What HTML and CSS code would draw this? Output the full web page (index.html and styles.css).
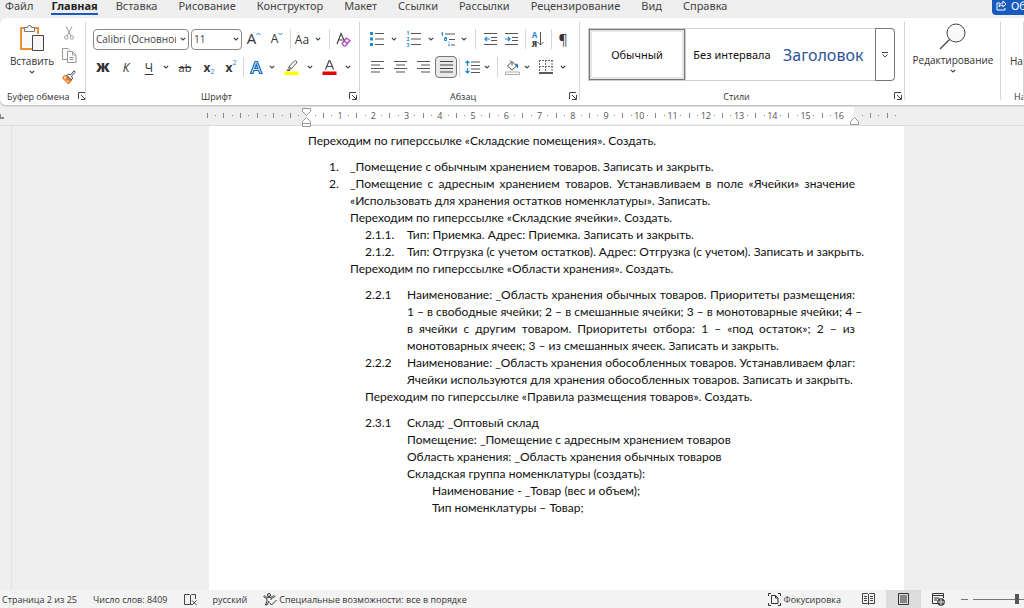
FILE: index.html
```html
<!DOCTYPE html>
<html lang="ru">
<head>
    <meta charset="UTF-8">
    <meta name="viewport" content="width=device-width, initial-scale=1">
    <title>Документ</title>
    <link rel="stylesheet" href="styles.css">
</head>
<body>
    <svg class="defs" aria-hidden="true">
        <symbol id="chev" viewBox="0 0 6 4"><path d="M.8.8 3 3 5.2.8" fill="none" stroke="#444" stroke-width="1.2"/></symbol>
        <symbol id="launch" viewBox="0 0 8 8"><path d="M.5 7V.5H7M3 3l4 4M7.5 3v4.500H3" fill="none" stroke="#444"/></symbol>
    </svg>

    <nav class="tabs">
        <a href="#">Файл</a>
        <a href="#" class="active">Главная</a>
        <a href="#">Вставка</a>
        <a href="#">Рисование</a>
        <a href="#">Конструктор</a>
        <a href="#">Макет</a>
        <a href="#">Ссылки</a>
        <a href="#">Рассылки</a>
        <a href="#">Рецензирование</a>
        <a href="#">Вид</a>
        <a href="#">Справка</a>
        <button class="share">
            <svg width="11" height="11" viewBox="0 0 11 11" fill="none" stroke="#fff"><path d="M4 3H1v7h8V8M3 7c0-3 2-4 4-4V1l3 3-3 3V5C5 5 4 6 3 7z"/></svg>
            <span>Общий доступ</span>
        </button>
    </nav>

    <header class="ribbon">
        <section class="group clipboard">
            <div class="group-body">
                <button class="big paste">
                    <svg width="26" height="28" viewBox="0 0 26 28" fill="none">
                        <path d="M6 4H2v21h11M15 4h4v6" stroke="#e8912d" stroke-width="2"/>
                        <path d="M4 6h13v17H4z" fill="#fafafa"/>
                        <path d="M5.500 3.500h3a2 2 0 0 1 4 0h3v4h-10z" fill="#fff" stroke="#777"/>
                        <path d="M13.500 11.500h11v15h-11z" fill="#f7f7f7" stroke="#444"/>
                    </svg>
                    <span>Вставить</span>
                    <svg width="6" height="4"><use href="#chev"/></svg>
                </button>
                <div class="clip-tools">
                    <button aria-label="Вырезать"><svg width="10" height="14" viewBox="0 0 10 14" fill="none" stroke="#999"><path d="M2 .5 7 10M8 .5 3 10"/><circle cx="2.200" cy="11.500" r="1.700"/><circle cx="7.800" cy="11.500" r="1.700"/></svg></button>
                    <button aria-label="Копировать"><svg width="15" height="15" viewBox="0 0 15 15" fill="#fafafa" stroke="#999"><path d="M5 11.500H.5V.5H6l2 2"/><path d="M5.500 3.500h5l3.500 3.500v7.500H5.500zM10.500 3.500V7H14M7.500 9.500h4M7.500 11.500h4"/></svg></button>
                    <button aria-label="Формат по образцу"><svg width="14" height="14" viewBox="0 0 14 14"><path d="M2 6 1 8l5.500 5.500L9.500 10 5 5.500z" fill="#fff" stroke="#e8791d" stroke-width="1.300"/><path d="M3 9l5 3 1.500-2L5 6z" fill="#e8791d"/><path d="M5 5.500 6.500 4l2 1 3.500-4.200 1.400 1.400L9.500 6l1 2.200L9.400 10z" fill="#fff" stroke="#444"/></svg></button>
                </div>
            </div>
            <footer><span>Буфер обмена</span><button aria-label="Параметры буфера обмена"><svg width="8" height="8"><use href="#launch"/></svg></button></footer>
        </section>

        <section class="group font">
            <div class="group-body">
                <div class="row font-top">
                    <div class="combo">
                        <select aria-label="Шрифт"><option>Calibri (Основной текст)</option></select>
                        <svg width="6" height="4"><use href="#chev"/></svg>
                    </div>
                    <div class="combo">
                        <select aria-label="Размер шрифта"><option>11</option></select>
                        <svg width="6" height="4"><use href="#chev"/></svg>
                    </div>
                    <button class="grow" aria-label="Увеличить размер шрифта">A<svg width="5" height="4" viewBox="0 0 5 4"><path d="M.5 3 2.500 1l2 2" fill="none" stroke="#1e88cf"/></svg></button>
                    <button class="shrink" aria-label="Уменьшить размер шрифта">A<svg width="5" height="4" viewBox="0 0 5 4"><path d="M.5 1l2 2 2-2" fill="none" stroke="#1e88cf"/></svg></button>
                    <i class="sep"></i>
                    <button class="case">Aa</button>
                    <button aria-label="Варианты регистра"><svg width="6" height="4"><use href="#chev"/></svg></button>
                    <i class="sep"></i>
                    <button aria-label="Очистить форматирование"><svg width="15" height="15" viewBox="0 0 15 15" fill="none"><path d="M1 12 5 1.500 8.500 9M2.500 8h4.500" stroke="#444" stroke-width="1.200"/><path d="M6 11.500 10.500 6l3.500 2.500-4.500 5.500H8zM8 9l3.500 2.500" fill="#f6e6f8" stroke="#a63fb5" stroke-width="1.200"/></svg></button>
                </div>
                <div class="row font-bottom">
                    <button class="bold">Ж</button>
                    <button class="italic">К</button>
                    <button class="underline">Ч</button>
                    <button aria-label="Вид подчёркивания"><svg width="6" height="4"><use href="#chev"/></svg></button>
                    <button class="strike">ab</button>
                    <button class="script"><b>x</b><sub>2</sub></button>
                    <button class="script"><b>x</b><sup>2</sup></button>
                    <i class="sep"></i>
                    <button aria-label="Текстовые эффекты"><svg width="15" height="15" viewBox="0 0 15 15"><path d="M1.500 13.500 6 1.500h2.500L13 13.500h-2.500L9.500 10.500H5l-1 3zM5.800 8.500h3L7.300 4.200z" fill="#bfe0f7" stroke="#1b6fb8" stroke-width="1.200"/></svg></button>
                    <button aria-label="Список эффектов"><svg width="6" height="4"><use href="#chev"/></svg></button>
                    <button aria-label="Цвет выделения"><svg width="15" height="15" viewBox="0 0 15 15"><path d="M.5 11.500h14V15H.5z" fill="#ff0"/><path d="M5 6.500 10.500 1c1-1 3 .5 2 2L7.500 8.500 5 9.500zM5 6.500l2.500 2M4.500 9 3 10.500h3" fill="#fff" stroke="#555"/></svg></button>
                    <button aria-label="Список цветов выделения"><svg width="6" height="4"><use href="#chev"/></svg></button>
                    <button aria-label="Цвет текста"><svg width="15" height="15" viewBox="0 0 15 15"><path d="M.5 11.500h14V15H.5z" fill="#e60000"/><path d="M3.500 9.500 7 .8h1L11.500 9.500M4.800 6.500h5.400" fill="none" stroke="#444" stroke-width="1.200"/></svg></button>
                    <button aria-label="Список цветов текста"><svg width="6" height="4"><use href="#chev"/></svg></button>
                </div>
            </div>
            <footer><span>Шрифт</span><button aria-label="Параметры шрифта"><svg width="8" height="8"><use href="#launch"/></svg></button></footer>
        </section>

        <section class="group paragraph">
            <div class="group-body">
                <div class="row para-top">
                    <button aria-label="Маркеры"><svg width="15" height="14" viewBox="0 0 15 14"><path d="M0 0h3v3H0zM0 5.500h3v3H0zM0 11h3v3H0z" fill="#1e88cf"/><path d="M5 1.500h9M5 7h9M5 12.500h9" stroke="#555"/></svg></button>
                    <button aria-label="Список маркеров"><svg width="6" height="4"><use href="#chev"/></svg></button>
                    <button class="numbered" aria-label="Нумерация"><span>1<br>2<br>3</span><svg width="10" height="14" viewBox="0 0 10 14"><path d="M0 1.500h10M0 7h10M0 12.500h10" stroke="#555"/></svg></button>
                    <button aria-label="Список нумерации"><svg width="6" height="4"><use href="#chev"/></svg></button>
                    <button aria-label="Многоуровневый список"><svg width="15" height="15" viewBox="0 0 15 15" fill="none"><path d="M0 1.500 1.500.5V4M3.500 5.500h2v3h-2v-2h2M8 9.500v1M8 11.500V14.500" stroke="#1e88cf"/><path d="M4 2h10M8 7.500h6M10 13h4" stroke="#555"/></svg></button>
                    <button aria-label="Список уровней"><svg width="6" height="4"><use href="#chev"/></svg></button>
                    <i class="sep"></i>
                    <button aria-label="Уменьшить отступ"><svg width="13" height="12" viewBox="0 0 13 12" fill="none"><path d="M0 .5h13M7 4.500h6M7 7.500h6M0 11.500h13" stroke="#555"/><path d="M6 6H1M3 4 1 6l2 2" stroke="#1e88cf" stroke-width="1.200"/></svg></button>
                    <button aria-label="Увеличить отступ"><svg width="13" height="12" viewBox="0 0 13 12" fill="none"><path d="M0 .5h13M7 4.500h6M7 7.500h6M0 11.500h13" stroke="#555"/><path d="M0 6h5M3 4l2 2-2 2" stroke="#1e88cf" stroke-width="1.200"/></svg></button>
                    <i class="sep"></i>
                    <button class="sort" aria-label="Сортировка"><span>А<br><b>Я</b></span><svg width="7" height="14" viewBox="0 0 7 14"><path d="M3.500 0v13M.5 10l3 3 3-3" fill="none" stroke="#555"/></svg></button>
                    <i class="sep"></i>
                    <button class="pilcrow" aria-label="Отобразить все знаки">¶</button>
                </div>
                <div class="row para-bottom">
                    <button aria-label="По левому краю"><svg width="13" height="12" viewBox="0 0 13 12"><path d="M0 .5h13M0 4h9M0 7.500h13M0 11h9" stroke="#555"/></svg></button>
                    <button aria-label="По центру"><svg width="13" height="12" viewBox="0 0 13 12"><path d="M0 .5h13M2 4h9M0 7.500h13M2 11h9" stroke="#555"/></svg></button>
                    <button aria-label="По правому краю"><svg width="13" height="12" viewBox="0 0 13 12"><path d="M0 .5h13M4 4h9M0 7.500h13M4 11h9" stroke="#555"/></svg></button>
                    <button class="pressed" aria-label="По ширине" aria-pressed="true"><svg width="13" height="12" viewBox="0 0 13 12"><path d="M0 .5h13M0 4h13M0 7.500h13M0 11h13" stroke="#444"/></svg></button>
                    <i class="sep"></i>
                    <button aria-label="Интервал"><svg width="15" height="14" viewBox="0 0 15 14" fill="none"><path d="M6 2h9M6 5.500h9M6 9h9M6 12.500h9" stroke="#555"/><path d="M2.500 1v5M.5 3l2-2 2 2M2.500 8v5M.5 11l2 2 2-2" stroke="#1e88cf" stroke-width="1.200"/></svg></button>
                    <button aria-label="Список интервалов"><svg width="6" height="4"><use href="#chev"/></svg></button>
                    <i class="sep"></i>
                    <button aria-label="Заливка"><svg width="15" height="15" viewBox="0 0 15 15"><path d="M.5 12h14v2.500H.5z" fill="#fff" stroke="#aaa"/><path d="M2.500 6 7 1.500l4.500 4.500L7 10zM5 .5l2 2v3" fill="#fff" stroke="#555"/><path d="M11 3.500c2 0 2.500 2 2 5.500-.8-2-1.300-3-2.500-3z" fill="#1e6fb8"/></svg></button>
                    <button aria-label="Список заливок"><svg width="6" height="4"><use href="#chev"/></svg></button>
                    <button aria-label="Границы"><svg width="14" height="14" viewBox="0 0 14 14"><path d="M.5 0v12M6.500 0v12M13 0v12M0 .5h14M0 6.500h14" fill="none" stroke="#666" stroke-dasharray="2 1"/><path d="M0 13h14" stroke="#222" stroke-width="1.500"/></svg></button>
                    <button aria-label="Список границ"><svg width="6" height="4"><use href="#chev"/></svg></button>
                </div>
            </div>
            <footer><span>Абзац</span><button aria-label="Параметры абзаца"><svg width="8" height="8"><use href="#launch"/></svg></button></footer>
        </section>

        <section class="group styles">
            <div class="group-body">
                <div class="gallery">
                    <button class="style selected">Обычный</button>
                    <button class="style">Без интервала</button>
                    <button class="style heading">Заголовок 1</button>
                    <button class="more" aria-label="Все стили"><svg width="8" height="6" viewBox="0 0 8 6"><path d="M1 .5h6M1.500 2.500 4 5l2.500-2.500" fill="none" stroke="#444"/></svg></button>
                </div>
            </div>
            <footer><span>Стили</span><button aria-label="Параметры стилей"><svg width="8" height="8"><use href="#launch"/></svg></button></footer>
        </section>

        <section class="group editing">
            <button class="big">
                <svg width="28" height="28" viewBox="0 0 28 28"><circle cx="17" cy="10" r="9" fill="#f8f8f8" stroke="#444"/><path d="M10.500 16.500 1 26" stroke="#444" stroke-width="1.200"/></svg>
                <span>Редактирование</span>
                <svg width="6" height="4"><use href="#chev"/></svg>
            </button>
        </section>

        <section class="group addins">
            <div class="group-body"><button>Надстройки</button></div>
            <footer><span>Надстройки</span></footer>
        </section>
    </header>

    <div class="ruler">
        <span class="tab-stop"></span>
        <div class="scale">
            <div class="off before"><i></i><i></i><i></i><i></i><i></i><i></i><i></i><i></i><i></i><i></i><i></i><i></i></div>
            <div class="on">
                <span class="cm"><i></i><i></i><i></i><b>1</b></span><span class="cm"><i></i><i></i><i></i><b>2</b></span><span class="cm"><i></i><i></i><i></i><b>3</b></span><span class="cm"><i></i><i></i><i></i><b>4</b></span>
                <span class="cm"><i></i><i></i><i></i><b>5</b></span><span class="cm"><i></i><i></i><i></i><b>6</b></span><span class="cm"><i></i><i></i><i></i><b>7</b></span><span class="cm"><i></i><i></i><i></i><b>8</b></span>
                <span class="cm"><i></i><i></i><i></i><b>9</b></span><span class="cm"><i></i><i></i><i></i><b>10</b></span><span class="cm"><i></i><i></i><i></i><b>11</b></span><span class="cm"><i></i><i></i><i></i><b>12</b></span>
                <span class="cm"><i></i><i></i><i></i><b>13</b></span><span class="cm"><i></i><i></i><i></i><b>14</b></span><span class="cm"><i></i><i></i><i></i><b>15</b></span><span class="cm"><i></i><i></i><i></i><b>16</b></span>
                <svg class="indent left" width="9" height="20" viewBox="0 0 9 20"><path d="M.5 1.500h8v3l-4 4-4-4zM.5 19.500v-5l4-4 4 4v5zM.5 16.500h8" fill="#fff" stroke="#999"/></svg>
                <svg class="indent right" width="9" height="20" viewBox="0 0 9 20"><path d="M.5 17.500v-3l4-4 4 4v3z" fill="#fff" stroke="#999"/></svg>
            </div>
            <div class="off after"><i></i><i></i><i></i><i></i><i></i></div>
        </div>
    </div>

    <main class="workspace">
        <div class="side-ruler"></div>
        <article class="page">
            <p>Переходим по гиперссылке «Складские помещения». Создать.</p>
            <ol class="level1 spaced">
                <li><span>1.</span><p>_Помещение с обычным хранением товаров. Записать и закрыть.</p></li>
                <li><span>2.</span><p class="justified">
                    <span>_Помещение с адресным хранением товаров. Устанавливаем в поле «Ячейки» значение </span>
                    <span>«Использовать для хранения остатков номенклатуры». Записать.</span>
                </p></li>
            </ol>
            <p class="in1">Переходим по гиперссылке «Складские ячейки». Создать.</p>
            <ol class="level2">
                <li><span>2.1.1.</span><p>Тип: Приемка. Адрес: Приемка. Записать и закрыть.</p></li>
                <li><span>2.1.2.</span><p>Тип: Отгрузка (с учетом остатков). Адрес: Отгрузка (с учетом). Записать и закрыть.</p></li>
            </ol>
            <p class="in1">Переходим по гиперссылке «Области хранения». Создать.</p>
            <ol class="level2 spaced">
                <li><span>2.2.1</span><p class="justified">
                    <span>Наименование: _Область хранения обычных товаров. Приоритеты размещения: </span>
                    <span>1 – в свободные ячейки; 2 – в смешанные ячейки; 3 – в монотоварные ячейки; 4 – </span>
                    <span>в ячейки с другим товаром. Приоритеты отбора: 1 – «под остаток»; 2 – из </span>
                    <span>монотоварных ячеек; 3 – из смешанных ячеек. Записать и закрыть.</span>
                </p></li>
                <li><span>2.2.2</span><p class="justified">
                    <span>Наименование: _Область хранения обособленных товаров. Устанавливаем флаг: </span>
                    <span>Ячейки используются для хранения обособленных товаров. Записать и закрыть.</span>
                </p></li>
            </ol>
            <p class="in2">Переходим по гиперссылке «Правила размещения товаров». Создать.</p>
            <ol class="level2 spaced">
                <li><span>2.3.1</span><div>
                    <p>Склад: _Оптовый склад</p>
                    <p>Помещение: _Помещение с адресным хранением товаров</p>
                    <p>Область хранения: _Область хранения обычных товаров</p>
                    <p>Складская группа номенклатуры (создать):</p>
                    <p class="sub">Наименование - _Товар (вес и объем);</p>
                    <p class="sub">Тип номенклатуры – Товар;</p>
                </div></li>
            </ol>
        </article>
    </main>

    <footer class="status">
        <span>Страница 2 из 25</span>
        <span>Число слов: 8409</span>
        <button aria-label="Правописание"><svg width="13" height="13" viewBox="0 0 13 13" fill="none" stroke="#444"><path d="M6.500 2v9.500H.5V1.500h5l1 1 1-1h4V6M6.500 11.500H8M8 7.500l4.500 4.500M12.500 7.500 8 12"/></svg></button>
        <span>русский</span>
        <button class="access"><svg width="14" height="13" viewBox="0 0 14 13" fill="none" stroke="#333"><circle cx="6" cy="2" r="1.500"/><path d="M1 3c1-1 1.500 1.500 5 1.500S10 2 11.500 3 9 5 8 5.500V7M1 3c-1 1 1.500 2 3 2.500V8l-1.500 4H4l2-4M6.500 9.500l2 2.500 5-5"/></svg>Специальные возможности: все в порядке</button>
        <div class="views">
            <button class="focus"><svg width="13" height="13" viewBox="0 0 13 13" fill="none" stroke="#333"><path d="M3 .5H.5V3M10 .5h2.500V3M.5 10v2.500H3M12.500 10v2.500H10M3.500 2.500h4l2.500 2.500v5.500H3.500zM7.500 2.500V5H10"/></svg>Фокусировка</button>
            <button class="view" aria-label="Режим чтения"><svg width="13" height="12" viewBox="0 0 13 12" fill="none" stroke="#444"><path d="M6.500 1.500v10M6.500 1.500 5.500.5h-5v10h5l1 1 1-1h5V.5h-5zM2 3.500h3M2 5.500h3M2 7.500h3M8 3.500h3M8 5.500h3M8 7.500h3"/></svg></button>
            <button class="view current" aria-label="Разметка страницы"><svg width="11" height="12" viewBox="0 0 11 12" fill="none" stroke="#333"><path d="M.5.5h10v11H.5zM2 3h7M2 5h7M2 7h7M2 9h7"/></svg></button>
            <button class="view" aria-label="Веб-документ"><svg width="13" height="13" viewBox="0 0 13 13" fill="none" stroke="#333"><path d="M6 10.500H.5V.5h11V5M.5 2.500h11M2 5h5M2 7h3"/><circle cx="9" cy="9" r="3.500" fill="#555"/><path d="M5.500 9h7M9 5.500v7" stroke="#ddd"/></svg></button>
            <button class="minus" aria-label="Уменьшить"></button>
            <input class="zoom" type="range" min="0" max="100" value="90" aria-label="Масштаб">
        </div>
    </footer>
</body>
</html>
```
FILE: styles.css
```css
* {
    box-sizing: border-box;
}
body {
    margin: 0;
    min-height: 100vh;
    display: flex;
    flex-direction: column;
    overflow: hidden;
    background-color: #efefef;
    color: #333;
    font-family: "Open Sans", "Noto Sans", sans-serif;
    font-size: 10px;
}
button {
    display: flex;
    align-items: center;
    justify-content: center;
    padding: 0;
    border: none;
    background: none;
    color: inherit;
    font: inherit;
    white-space: nowrap;
}
svg {
    flex: none;
    display: block;
}
p, ol {
    margin: 0;
    padding: 0;
}
.defs {
    width: 0;
    height: 0;
    position: absolute;
}

/* tabs */
.tabs {
    display: flex;
    gap: 21px;
    height: 18px;
    padding-left: 5px;
    font-family: "Noto Sans", sans-serif;
    font-size: 11px;
}
.tabs a {
    height: 15px;
    line-height: 11px;
    color: #444;
    text-decoration: none;
}
.tabs .active {
    margin: 0 -3px;
    color: #222;
    font-weight: bold;
    border-bottom: 2px solid #185abd;
}
.share {
    width: 32px;
    height: 15px;
    margin-left: auto;
    padding: 0 0 4px 4px;
    gap: 4px;
    justify-content: flex-start;
    overflow: hidden;
    border-radius: 0 0 0 4px;
    background-color: #185abd;
    color: #fff;
}

/* ribbon */
.ribbon {
    display: flex;
    height: 87px;
    overflow: hidden;
    border-radius: 6px 0 0 6px;
    background-color: #fff;
    box-shadow: 0 1px 2px rgba(0,0,0,0.25);
    z-index: 1;
}
.group {
    display: flex;
    flex-direction: column;
    flex: none;
    position: relative;
    padding: 10px 0 0 7px;
}
.group::after {
    content: "";
    position: absolute;
    top: 4px;
    right: 0;
    bottom: 5px;
    width: 1px;
    background-color: #d6d6d6;
}
.group footer {
    display: flex;
    align-items: center;
    height: 14px;
    margin-top: auto;
    margin-bottom: 2px;
    padding-right: 3px;
    font-size: 9px;
}
.group footer span {
    flex: 1;
    padding-right: 9px;
    text-align: center;
    white-space: nowrap;
}
.clipboard {
    width: 86px;
}
.clipboard .group-body {
    display: flex;
    gap: 4px;
}
.big {
    flex-direction: column;
    gap: 3px;
    justify-content: flex-start;
}
.big span {
    line-height: 12px;
}
.paste {
    width: 50px;
    margin: -4px 0 0 0;
}
.clip-tools {
    display: flex;
    flex-direction: column;
    width: 16px;
    margin-top: -6px;
}
.clip-tools button {
    height: 22px;
}
.font {
    width: 274px;
}
.paragraph {
    width: 220px;
    padding-left: 6px;
}
.styles {
    flex: 1;
    min-width: 280px;
    padding-left: 8px;
}
.editing {
    width: 96px;
    padding: 5px 0 0 0;
}
.addins {
    width: 23px;
    padding-left: 9px;
}
.addins .group-body {
    padding-top: 26px;
}
.addins footer {
    padding-left: 4px;
}
.row {
    display: grid;
    height: 22px;
    margin-bottom: 6px;
    align-items: center;
    justify-items: center;
}
.row button {
    height: 22px;
}
.font-top {
    grid-template-columns: 98px 51px 24px 22px 4px 20px 12px 10px 18px;
}
.font-bottom {
    grid-template-columns: 20px 26px 20px 14px 24px 24px 20px 4px 22px 10px 28px 10px 28px 10px;
}
.para-top {
    grid-template-columns: 22px 12px 26px 10px 24px 8px 14px 16px 26px 2px 24px 2px 22px;
}
.para-bottom {
    grid-template-columns: 22px 24px 22px 24px 2px 24px 6px 14px 16px 14px 24px 10px;
}
.sep {
    width: 1px;
    height: 20px;
    background-color: #d6d6d6;
}
.combo {
    display: grid;
    align-items: center;
    justify-self: start;
    width: calc(100% - 2px);
}
.combo:nth-child(2) {
    width: 100%;
}
.combo select, .combo svg {
    grid-area: 1 / 1;
}
.combo svg {
    justify-self: end;
    margin-right: 3px;
}
.combo select {
    appearance: none;
    width: 100%;
    height: 21px;
    padding: 0 12px 0 2px;
    border: 1px solid #8a8a8a;
    border-radius: 4px;
    background-color: #fff;
    color: #444;
    font: inherit;
}
.grow, .shrink {
    align-items: flex-start;
    font-size: 15px;
    line-height: 20px;
}
.shrink {
    font-size: 12px;
    line-height: 22px;
}
.grow svg, .shrink svg {
    margin-top: 4px;
}
.case {
    font-size: 12px;
}
.bold {
    font-size: 13px;
    font-weight: 800;
}
.italic {
    font-size: 12px;
    font-style: italic;
}
.underline {
    font-size: 12px;
    text-decoration: underline;
    text-underline-offset: 2px;
}
.strike {
    font-size: 11px;
    text-decoration: line-through;
}
.script b {
    font-size: 12px;
}
.script sub, .script sup {
    color: #1e88cf;
    font-size: 7px;
    line-height: 7px;
}
.script sub {
    align-self: flex-end;
    padding-bottom: 3px;
}
.script sup {
    align-self: flex-start;
    padding-top: 3px;
}
.numbered span {
    width: 5px;
    color: #1e88cf;
    font-size: 5px;
    font-weight: bold;
    line-height: 6px;
}
.sort span {
    color: #1e88cf;
    font-size: 8px;
    font-weight: bold;
    line-height: 9px;
}
.sort b {
    color: #444;
}
.pilcrow {
    font-size: 14px;
}
.row .pressed {
    width: 22px;
    border: 1px solid #777;
    border-radius: 4px;
    background-color: #e8e8e8;
}

/* style gallery */
.gallery {
    display: grid;
    grid-template-columns: 96px 94px 1fr 20px;
    height: 53px;
    margin-right: 10px;
    border: 1px solid #d0d0d0;
    border-right: none;
    border-radius: 4px;
}
.style {
    overflow: hidden;
    color: #111;
    font-family: "Noto Sans", sans-serif;
    font-size: 11px;
}
.selected {
    border: 1px solid #777;
    outline: 1px solid #ccc;
    box-shadow: inset 0 0 0 2px #e6e6e6;
}
.heading {
    justify-content: flex-start;
    margin-right: 7px;
    padding-left: 4px;
    color: #2f5597;
    font-size: 16px;
}
.more {
    margin: -1px 0;
    border: 1px solid #777;
    border-radius: 0 4px 4px 0;
}

/* ruler */
.ruler, .workspace {
    display: grid;
    grid-template-columns: 12px minmax(0, 197fr) 695px minmax(0, 120fr);
}
.ruler {
    height: 21px;
    border-bottom: 1px solid #dcdcdc;
}
.tab-stop {
    width: 4px;
    height: 5px;
    margin-top: 9px;
    border-bottom: 2px solid #888;
    border-left: 1px solid #888;
}
.scale {
    grid-column: 3;
    display: grid;
    grid-template-columns: 98px 547px 50px;
    padding-top: 2px;
}
.scale > div {
    display: grid;
    align-items: center;
    height: 17px;
}
.scale .on {
    grid-template-columns: repeat(16, 1fr);
    position: relative;
    padding: 0 11px 0 4px;
    background-color: #fff;
}
.scale .before {
    grid-template-columns: repeat(12, 1fr);
    margin-left: -6px;
    padding-right: 4px;
}
.scale .after {
    grid-template-columns: repeat(5, 1fr);
    padding: 0 4px;
}
.cm {
    display: grid;
    grid-template-columns: repeat(4, minmax(0, 1fr));
    align-items: center;
}
.scale i, .scale b {
    display: flex;
    justify-content: center;
    color: #555;
    font-size: 9px;
    font-weight: normal;
}
.scale i::before {
    content: "";
    width: 1px;
    height: 1px;
    background-color: #888;
}
.cm i:nth-child(even)::before, .before i:nth-child(odd)::before, .after i:nth-child(even)::before {
    height: 5px;
}
.indent {
    position: absolute;
    top: 0;
}
.indent.left {
    left: -5px;
}
.indent.right {
    right: -5px;
}

/* document */
.workspace {
    flex: 1;
}
.side-ruler {
    border-right: 1px solid #e2e2e2;
}
.page {
    grid-column: 3;
    padding: 6px 49px 0 99px;
    background-color: #fff;
    color: #111;
    font-family: Lato, sans-serif;
    font-size: 12px;
    line-height: 17px;
    white-space: nowrap;
}
.page ol {
    list-style: none;
}
.page li {
    display: grid;
}
.page .spaced {
    padding-top: 9px;
}
.level1 li {
    grid-template-columns: 21px minmax(0, 1fr);
    padding-left: 21px;
}
.level2 li {
    grid-template-columns: 42px minmax(0, 1fr);
    padding-left: 57px;
}
.justified span {
    display: block;
    text-align: justify;
    text-align-last: justify;
}
.justified span:last-child {
    text-align-last: left;
}
.in1 {
    padding-left: 42px;
}
.in2 {
    padding-left: 57px;
}
.sub {
    padding-left: 25px;
}

/* status bar */
.status {
    display: flex;
    align-items: center;
    gap: 16px;
    height: 18px;
    padding-left: 2px;
    background-color: #f3f3f3;
    font-size: 9px;
}
.access {
    gap: 2px;
}
.views {
    display: flex;
    align-items: center;
    margin-left: auto;
}
.focus {
    gap: 2px;
    margin-right: 10px;
}
.view {
    width: 35px;
    height: 18px;
}
.current {
    background-color: #dcdcdc;
}
.minus {
    width: 7px;
    height: 1px;
    margin: 0 5px;
    background-color: #777;
}
.zoom {
    appearance: none;
    width: 51px;
    height: 18px;
    margin: 0;
    background: linear-gradient(#777, #777) center / 100% 1px no-repeat;
}
.zoom::-webkit-slider-thumb {
    appearance: none;
    width: 4px;
    height: 10px;
    background-color: #555;
}
```
